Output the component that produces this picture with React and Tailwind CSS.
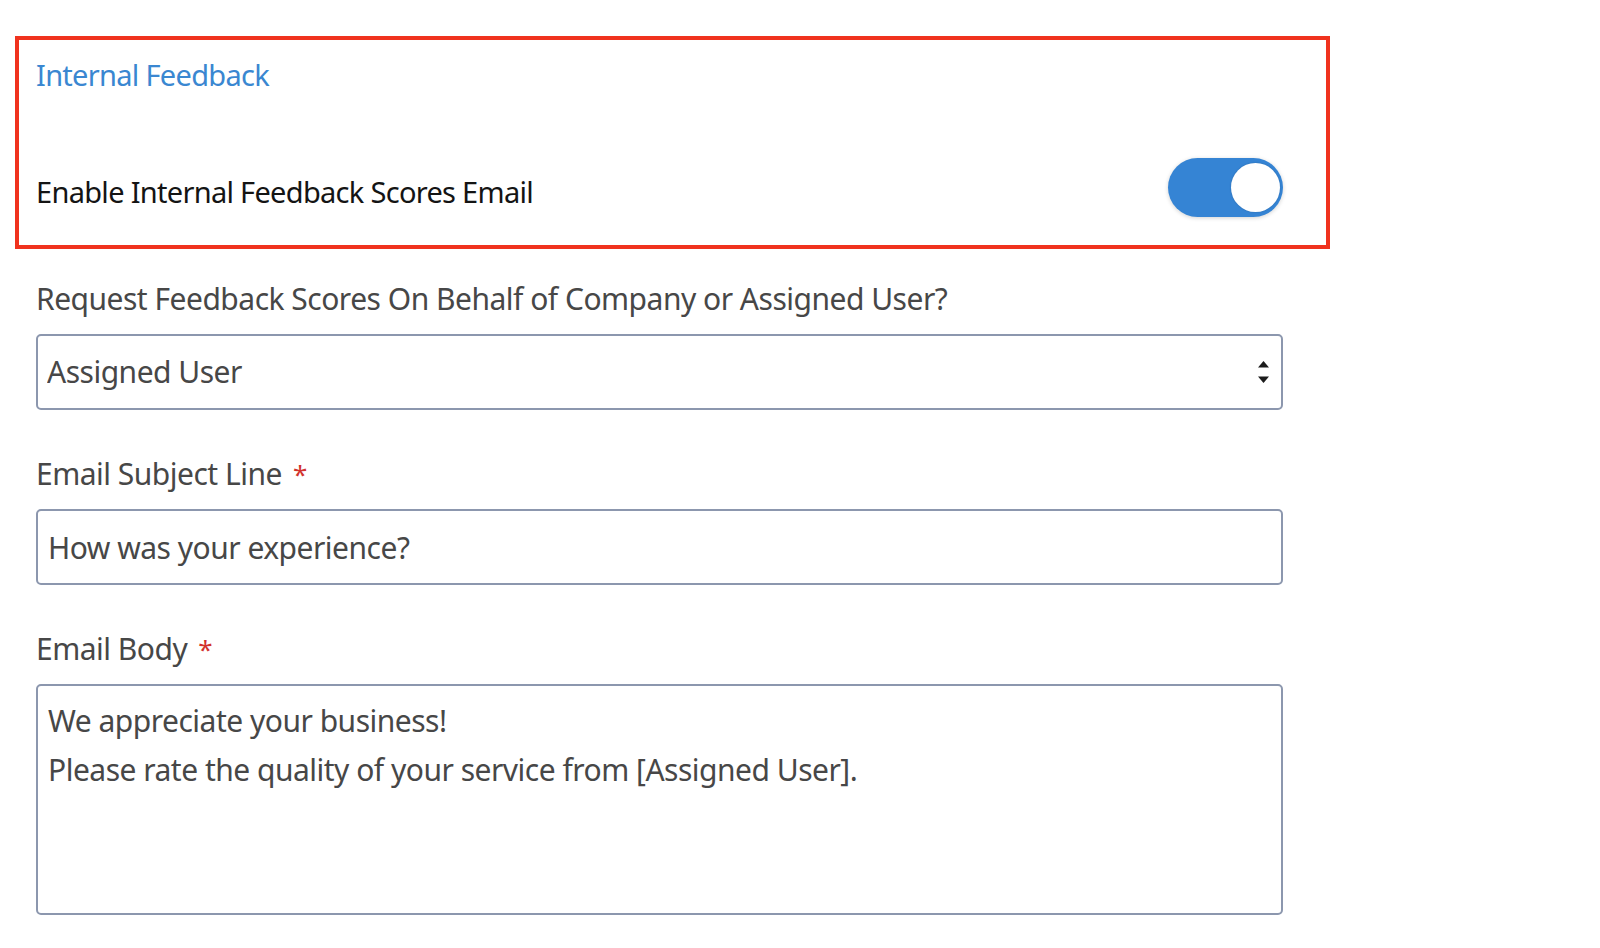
import React, { useState } from "react";

const font = { fontFamily: '"Noto Sans", "Open Sans", sans-serif' };

const Toggle = ({ on, onChange }) => (
  <button
    onClick={() => onChange(!on)}
    className={`relative w-[115px] h-[59px] rounded-full shrink-0 shadow-[0_1px_4px_rgba(0,0,0,0.18)] ${
      on ? "bg-[#3584d4]" : "bg-[#c9ced6]"
    }`}
  >
    <span
      className={`absolute top-[5px] w-[49px] h-[49px] rounded-full bg-white shadow-[0_0_2px_rgba(0,0,0,0.2)] ${
        on ? "right-[3px]" : "left-[3px]"
      }`}
    />
  </button>
);

const Label = ({ children, required }) => (
  <div className="text-[30px] leading-[36px] tracking-[-0.5px] text-[#474747]">
    {children}
    {required && <span className="text-[#d2322d] ml-[11px] align-top text-[26px]">*</span>}
  </div>
);

export default function App() {
  const [enabled, setEnabled] = useState(true);

  return (
    <div className="min-h-screen bg-white pl-[15px] pt-[36px]" style={font}>
      {/* Internal feedback box */}
      <div className="w-[1315px] h-[213px] border-4 border-[#f0321e] pt-[17px] pl-[17px] pr-[43px]">
        <h3 className="text-[29px] leading-[36px] tracking-[-0.7px] text-[#3a87d1]">Internal Feedback</h3>
        <div className="mt-[65px] flex items-center justify-between">
          <span className="text-[29px] leading-[36px] tracking-[-0.7px] text-[#141414] mt-[8px]">
            Enable Internal Feedback Scores Email
          </span>
          <Toggle on={enabled} onChange={setEnabled} />
        </div>
      </div>

      {/* Form fields */}
      <div className="ml-[21px] w-[1247px] mt-[32px]">
        <Label>Request Feedback Scores On Behalf of Company or Assigned User?</Label>
        <div className="relative mt-[17px]">
          <select
            defaultValue="user"
            className="w-full h-[76px] appearance-none border-2 border-[#8c97ae] rounded-[5px] pl-[9px] text-[30px] leading-[36px] tracking-[-0.5px] text-[#474747] bg-white outline-none"
            style={font}
          >
            <option value="company">Company</option>
            <option value="user">Assigned User</option>
          </select>
          <svg
            className="absolute right-[14px] top-[27px] pointer-events-none"
            width="11"
            height="22"
            viewBox="0 0 11 22"
          >
            <path d="M5.5 0 L11 6.5 L0 6.5 Z" fill="#1c1c1c" />
            <path d="M0 15.5 L11 15.5 L5.5 22 Z" fill="#1c1c1c" />
          </svg>
        </div>

        <div className="mt-[46px]">
          <Label required>Email Subject Line</Label>
        </div>
        <input
          defaultValue="How was your experience?"
          className="mt-[17px] w-full h-[76px] border-2 border-[#8c97ae] rounded-[5px] px-[10px] text-[30px] leading-[36px] tracking-[-0.5px] text-[#474747] outline-none"
          style={font}
        />

        <div className="mt-[46px]">
          <Label required>Email Body</Label>
        </div>
        <textarea
          defaultValue={
            "We appreciate your business!\nPlease rate the quality of your service from [Assigned User]."
          }
          className="mt-[17px] block w-full h-[231px] border-2 border-[#8c97ae] rounded-[5px] px-[10px] pt-[10px] text-[30px] leading-[49px] tracking-[-0.5px] text-[#474747] resize-none outline-none"
          style={font}
        />
      </div>
    </div>
  );
}
